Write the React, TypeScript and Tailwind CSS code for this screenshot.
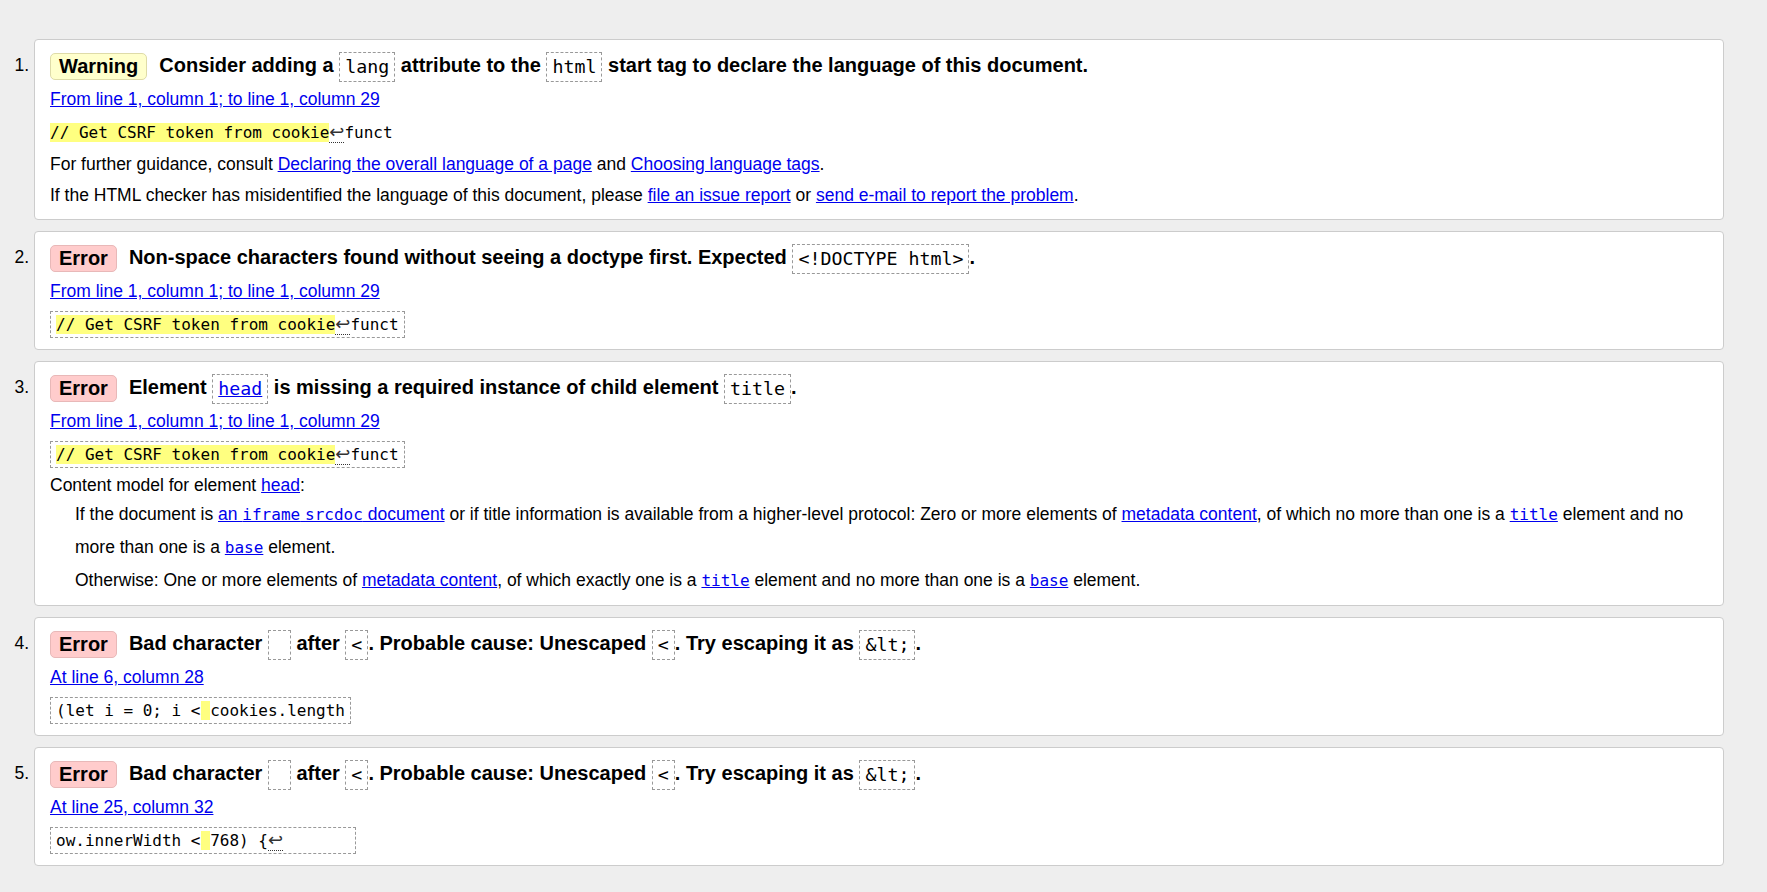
const MONO = "font-['DejaVu_Sans_Mono',monospace] text-[16px] font-normal"

const Badge = ({ kind }: { kind: 'warning' | 'error' }) =>
    kind === 'warning' ? (
        <span className="inline-block h-[27px] leading-[25px] px-[8px] mr-3 rounded-[5px] border border-[#dedba8] bg-[#ffffcc] align-middle">
            Warning
        </span>
    ) : (
        <span className="inline-block h-[27px] leading-[25px] px-[8px] mr-3 rounded-[5px] border border-[#e8b8b8] bg-[#ffcccc] align-middle">
            Error
        </span>
    )

// dashed box used for element names inside the message line
const Tag = ({ children, link }: { children: React.ReactNode; link?: boolean }) => (
    <code
        className={
            link
                ? "inline-block border border-dashed border-[#999] px-[5px] leading-[28px] align-middle font-['DejaVu_Sans_Mono',monospace] text-[18.3px] font-normal text-[#0000ee] underline"
                : "inline-block border border-dashed border-[#999] px-[5px] leading-[28px] align-middle font-['DejaVu_Sans_Mono',monospace] text-[18.3px] font-normal"
        }
    >
        {children}
    </code>
)

const Mark = ({ children }: { children: React.ReactNode }) => (
    <span className="bg-[#ffff80]">{children}</span>
)

const Ret = () => (
    <span className="font-['DejaVu_Sans',sans-serif] text-[18px] leading-[18px] border-b border-dotted border-[#333] text-[#333]">
        ↩
    </span>
)

const Link = ({ children, mono }: { children: React.ReactNode; mono?: boolean }) => (
    <a href="#" className={mono ? `${MONO} text-[#0000ee] underline` : 'text-[#0000ee] underline'}>
        {children}
    </a>
)

const Extract = ({ children }: { children: React.ReactNode }) => (
    <div className="mt-[3px] h-[30px] flex items-center">
        <code className={`${MONO} inline-block border border-dashed border-[#999] px-[5px] leading-[25px] whitespace-pre`}>
            {children}
        </code>
    </div>
)

const Item = ({ n, tight, children }: { n: number; tight?: boolean; children: React.ReactNode }) => (
    <li className="flex mb-[11px]">
        <div className="w-[34px] shrink-0 pr-[5px] pt-[11px] text-right leading-[31px]">{n}.</div>
        <div
            className={
                tight
                    ? 'flex-1 bg-white border border-[#cccccc] rounded-[4px] pl-[15px] pr-4 pt-[10px] pb-[8px]'
                    : 'flex-1 bg-white border border-[#cccccc] rounded-[4px] pl-[15px] pr-4 pt-[10px] pb-[10px]'
            }
        >
            {children}
        </div>
    </li>
)

const Heading = ({ children }: { children: React.ReactNode }) => (
    <div className="h-[31px] leading-[31px] text-[20px] font-bold whitespace-nowrap">{children}</div>
)

const Where = ({ children }: { children: React.ReactNode }) => (
    <div className="mt-[3px] leading-[30px]">
        <Link>{children}</Link>
    </div>
)

export default function App() {
    return (
        <div className="min-h-screen bg-[#eeeeee] text-black font-['Liberation_Sans',Arial,sans-serif] text-[17.5px] pt-[39px] pr-[43px]">
            <ol>
                <Item n={1}>
                    <Heading>
                        <Badge kind="warning" />
                        Consider adding a <Tag>lang</Tag> attribute to the <Tag>html</Tag> start tag to declare the
                        language of this document.
                    </Heading>
                    <Where>From line 1, column 1; to line 1, column 29</Where>
                    <div className="mt-[3px] h-[30px] flex items-center">
                        <code className={`${MONO} whitespace-pre leading-[25px]`}>
                            <Mark>// Get CSRF token from cookie</Mark>
                            <Ret />
                            funct
                        </code>
                    </div>
                    <p className="mt-[3px] leading-[28px]">
                        For further guidance, consult <Link>Declaring the overall language of a page</Link> and{' '}
                        <Link>Choosing language tags</Link>.
                    </p>
                    <p className="mt-[3px] leading-[28px]">
                        If the HTML checker has misidentified the language of this document, please{' '}
                        <Link>file an issue report</Link> or <Link>send e-mail to report the problem</Link>.
                    </p>
                </Item>

                <Item n={2}>
                    <Heading>
                        <Badge kind="error" />
                        Non-space characters found without seeing a doctype first. Expected{' '}
                        <Tag>&lt;!DOCTYPE html&gt;</Tag>.
                    </Heading>
                    <Where>From line 1, column 1; to line 1, column 29</Where>
                    <Extract>
                        <Mark>// Get CSRF token from cookie</Mark>
                        <Ret />
                        funct
                    </Extract>
                </Item>

                <Item n={3} tight>
                    <Heading>
                        <Badge kind="error" />
                        Element <Tag link>head</Tag> is missing a required instance of child element{' '}
                        <Tag>title</Tag>.
                    </Heading>
                    <Where>From line 1, column 1; to line 1, column 29</Where>
                    <Extract>
                        <Mark>// Get CSRF token from cookie</Mark>
                        <Ret />
                        funct
                    </Extract>
                    <p className="mt-[3px] leading-[26px]">
                        Content model for element <Link>head</Link>:
                    </p>
                    <div className="ml-[25px] leading-[32px]">
                        <p>
                            If the document is{' '}
                            <a href="#" className="text-[#0000ee] underline">
                                an <span className={MONO}>iframe</span> <span className={MONO}>srcdoc</span> document
                            </a>{' '}
                            or if title information is available from a higher-level protocol: Zero or more elements of{' '}
                            <Link>metadata content</Link>, of which no more than one is a <Link mono>title</Link> element
                            and no
                            <br />
                            more than one is a <Link mono>base</Link> element.
                        </p>
                        <p>
                            Otherwise: One or more elements of <Link>metadata content</Link>, of which exactly one is a{' '}
                            <Link mono>title</Link> element and no more than one is a <Link mono>base</Link> element.
                        </p>
                    </div>
                </Item>

                <Item n={4}>
                    <Heading>
                        <Badge kind="error" />
                        Bad character <Tag>{'\u00a0'}</Tag> after <Tag>&lt;</Tag>. Probable cause: Unescaped{' '}
                        <Tag>&lt;</Tag>. Try escaping it as <Tag>&amp;lt;</Tag>.
                    </Heading>
                    <Where>At line 6, column 28</Where>
                    <Extract>
                        (let i = 0; i &lt;<Mark>{' '}</Mark>cookies.length
                    </Extract>
                </Item>

                <Item n={5}>
                    <Heading>
                        <Badge kind="error" />
                        Bad character <Tag>{'\u00a0'}</Tag> after <Tag>&lt;</Tag>. Probable cause: Unescaped{' '}
                        <Tag>&lt;</Tag>. Try escaping it as <Tag>&amp;lt;</Tag>.
                    </Heading>
                    <Where>At line 25, column 32</Where>
                    <Extract>
                        ow.innerWidth &lt;<Mark>{' '}</Mark>768) {'{'}
                        <Ret />
                        {'       '}
                    </Extract>
                </Item>
            </ol>
        </div>
    )
}
